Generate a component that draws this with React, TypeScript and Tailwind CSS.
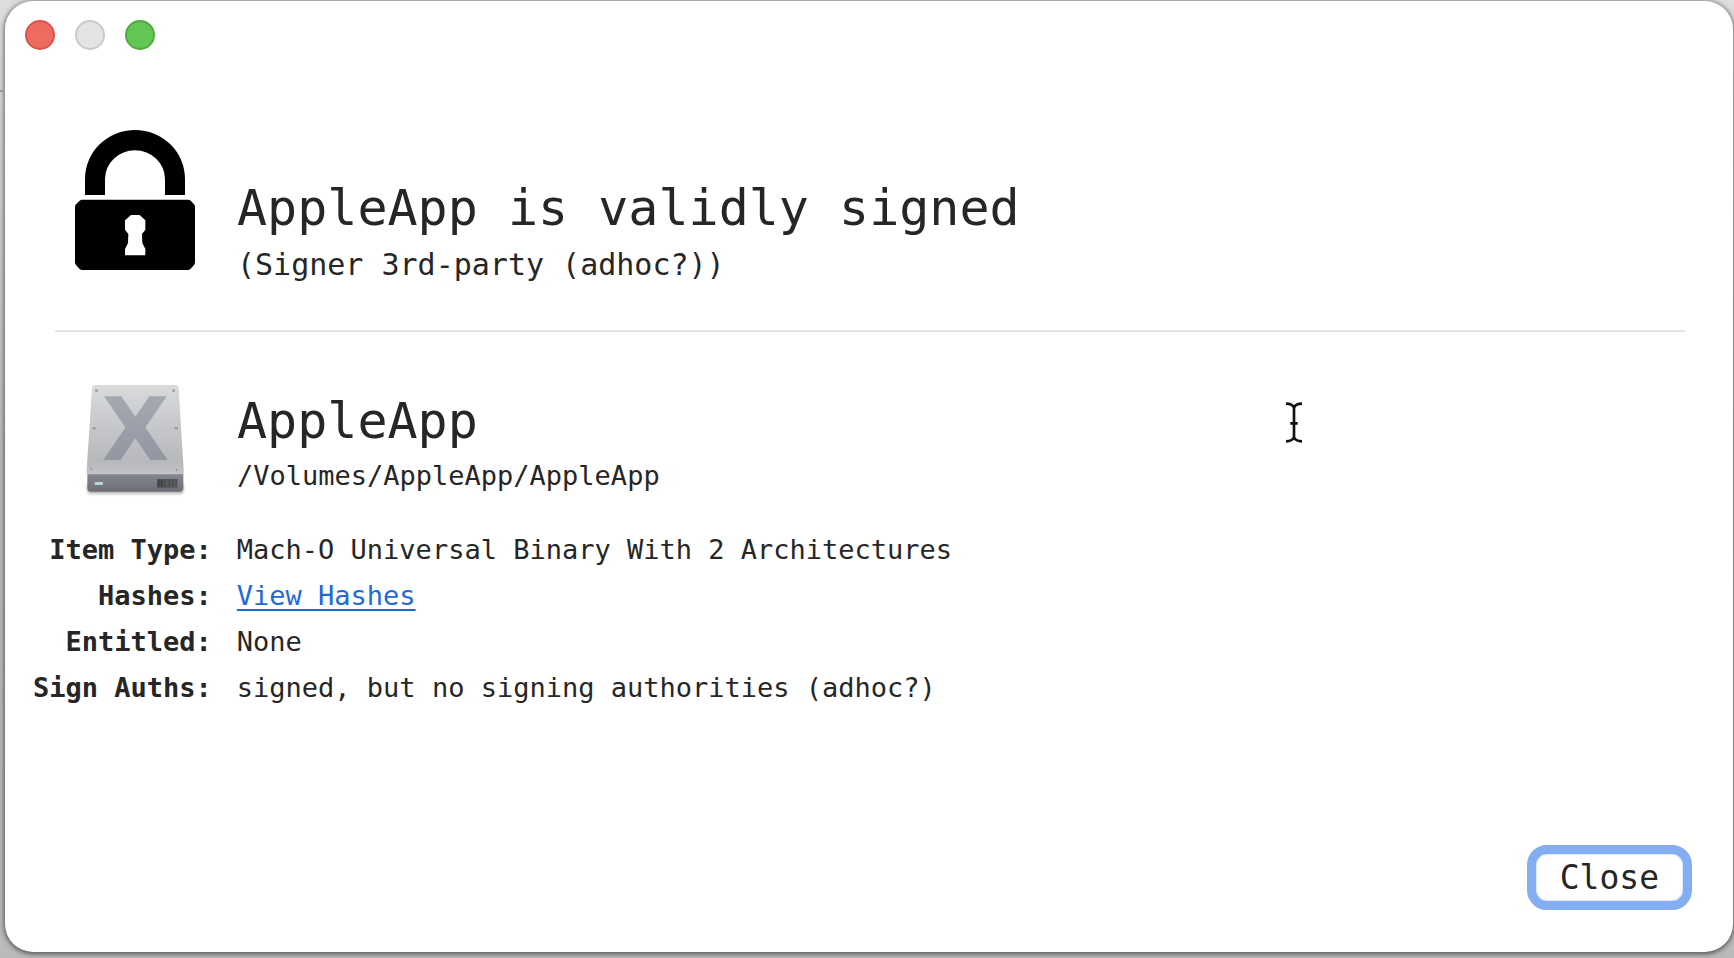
import type { ReactNode } from "react";

function PadlockIcon() {
  return (
    <svg viewBox="0 0 360 423" className="w-[120px] shrink-0" aria-hidden="true">
      <path d="M30 198V150A150 147 0 0 1 330 150V198H270V150A90 86 0 0 0 90 150V198Z" fill="#000" />
      <path
        fillRule="evenodd"
        fill="#000"
        d="M20 212H340Q346 212 350 218L357 226Q360 229 360 234V400Q360 405 357 408L347 419Q343 423 338 423H22Q17 423 13 419L3 408Q0 405 0 400V234Q0 229 3 226L13 216Q17 212 22 212ZM168 258L150 274V302L160 315L159 342L150 360V379H211V360L202 342L201 315L211 302V274L194 258Z"
      />
    </svg>
  );
}

function DriveIcon() {
  return (
    <svg viewBox="45 40 360 345" className="w-[120px] shrink-0 overflow-visible" aria-hidden="true">
      <defs>
        <linearGradient id="plate" x1="0" y1="0" x2="0" y2="1">
          <stop offset="0" stopColor="#d8dadc" />
          <stop offset="0.5" stopColor="#c4c6c9" />
          <stop offset="0.85" stopColor="#b6b8bc" />
          <stop offset="1" stopColor="#c2c4c7" />
        </linearGradient>
        <linearGradient id="front" x1="0" y1="0" x2="0" y2="1">
          <stop offset="0" stopColor="#85888f" />
          <stop offset="1" stopColor="#6b6e75" />
        </linearGradient>
        <linearGradient id="emblem" x1="0" y1="0" x2="0" y2="1">
          <stop offset="0" stopColor="#abaeb6" />
          <stop offset="1" stopColor="#8d909b" />
        </linearGradient>
        <filter id="soft" x="-10%" y="-50%" width="120%" height="200%">
          <feGaussianBlur stdDeviation="4" />
        </filter>
      </defs>
      <rect x="82" y="340" width="288" height="32" rx="8" fill="#000" opacity="0.3" filter="url(#soft)" />
      <path d="M82 312H370V355Q370 366 359 366H93Q82 366 82 355Z" fill="url(#front)" />
      <path d="M108 46H344Q355 46 356 57L371 300V314H80V300L96 57Q97 46 108 46Z" fill="url(#plate)" />
      <text
        x="226"
        y="272"
        textAnchor="middle"
        fill="url(#emblem)"
        className="font-['DejaVu_Sans'] text-[264px] font-bold"
      >
        X
      </text>
      <g fill="#96989d">
        <circle cx="109" cy="63" r="4" />
        <circle cx="341" cy="63" r="4" />
        <rect x="97" y="173" width="11" height="6" rx="2" />
        <rect x="343" y="173" width="11" height="6" rx="2" />
        <circle cx="94" cy="297" r="3" />
        <circle cx="350" cy="301" r="3" />
      </g>
      <rect x="104" y="337" width="25" height="9" rx="2" fill="#b4d3dc" />
      <rect x="291" y="328" width="61" height="26" fill="#505257" />
      <path d="M297 330V352M305 330V352" stroke="#3d3f44" strokeWidth="4" />
      <path d="M321 330V352M333 330V352M344 330V352" stroke="#5c5e64" strokeWidth="4" />
    </svg>
  );
}

function TextCursor() {
  return (
    <svg
      viewBox="0 0 54 126"
      className="pointer-events-none absolute top-[401px] left-[1285px] w-[18px]"
      aria-hidden="true"
    >
      <path
        d="M3 8Q22 8 27 20Q32 8 51 8M27 18V111M3 121Q22 121 27 109Q32 121 51 121M16 67H38"
        fill="none"
        stroke="#111"
        strokeWidth="8"
      />
    </svg>
  );
}

function Summary({ icon, title, children }: { icon: ReactNode; title: string; children: ReactNode }) {
  return (
    <section className="flex items-end gap-[42px] px-5">
      {icon}
      <div>
        <h1 className="text-[50px] leading-[60px]">{title}</h1>
        {children}
      </div>
    </section>
  );
}

function Detail({ label, children }: { label: string; children: ReactNode }) {
  return (
    <>
      <dt className="text-right font-bold">{label}</dt>
      <dd>{children}</dd>
    </>
  );
}

export default function App() {
  return (
    <div className="relative flex min-h-screen flex-col overflow-hidden bg-gradient-to-b from-[#dedede] via-[#bcbcbc] to-[#bababa] pt-px pr-px pb-[6px] pl-[5px] font-['DejaVu_Sans_Mono',monospace] text-[#262626]">
      <div className="absolute top-[90px] left-0 h-0.5 w-[5px] bg-[#999]" />
      <main className="flex grow flex-col rounded-[28px] bg-white shadow-[0_1px_5px_1px_rgba(0,0,0,0.55)]">
        <div className="flex gap-5 px-5 pt-[19px]">
          <button aria-label="Close window" className="size-[30px] rounded-full border-2 border-[#d9544b] bg-[#ed6b60]" />
          <button aria-label="Minimize window" disabled className="size-[30px] rounded-full border-2 border-[#cacaca] bg-[#e3e3e3]" />
          <button aria-label="Zoom window" className="size-[30px] rounded-full border-2 border-[#4fac3d] bg-[#62c655]" />
        </div>

        <div className="mt-[79px] pr-12 pl-[50px]">
          <Summary icon={<div className="pb-[15px]"><PadlockIcon /></div>} title="AppleApp is validly signed">
            <p className="mt-[7px] text-[30px] leading-10">(Signer 3rd-party (adhoc?))</p>
          </Summary>
          <hr className="mt-[45px] mb-[51px] border-t-2 border-[#e4e4e4]" />
          <Summary icon={<DriveIcon />} title="AppleApp">
            <p className="mt-[7px] pb-1 text-[27px] leading-9">/Volumes/AppleApp/AppleApp</p>
          </Summary>
        </div>

        <dl className="mt-[29px] grid grid-cols-[auto_1fr] gap-x-[25px] pl-7 text-[27px] leading-[46px]">
          <Detail label="Item Type:">Mach-O Universal Binary With 2 Architectures</Detail>
          <Detail label="Hashes:">
            <a href="#hashes" className="text-[#1f69d8] underline decoration-2 underline-offset-4">
              View Hashes
            </a>
          </Detail>
          <Detail label="Entitled:">None</Detail>
          <Detail label="Sign Auths:">signed, but no signing authorities (adhoc?)</Detail>
        </dl>

        <div className="mt-auto flex justify-end pr-[41px] pb-[42px]">
          <button className="rounded-[20px] border-[9px] border-[#84aef2] bg-white px-6 text-[33px] leading-[47px] shadow-[inset_0_0_2px_#84aef2]">
            Close
          </button>
        </div>
      </main>
      <TextCursor />
    </div>
  );
}
